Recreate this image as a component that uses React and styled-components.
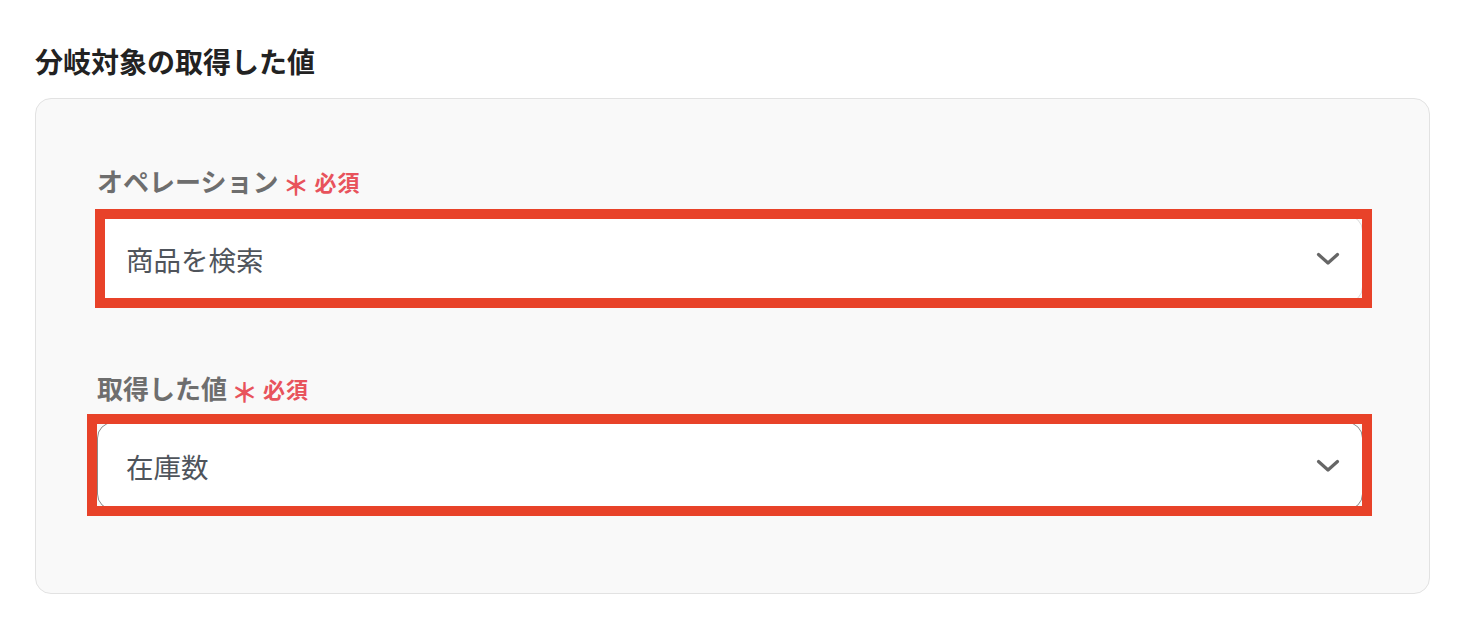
import React from 'react'
import styled, { createGlobalStyle } from 'styled-components'

const GlobalStyle = createGlobalStyle`
  body {
    margin: 0;
    background: #ffffff;
    font-family: "Noto Sans CJK JP", "Noto Sans", sans-serif;
  }
`

const Page = styled.div`
  padding: 41px 49px 0 35px;
`

const Title = styled.h2`
  margin: 0 0 17px;
  font-size: 28px;
  line-height: 40px;
  font-weight: 700;
  color: #222222;
`

const Card = styled.div`
  background: #f9f9f9;
  border: 1px solid #e2e2e2;
  border-radius: 16px;
  padding: 64px 66px 83px 61px;
  display: flex;
  flex-direction: column;
  gap: 67px;
`

const Field = styled.div`
  display: flex;
  flex-direction: column;
  gap: 16px;
`

const Label = styled.div`
  display: flex;
  align-items: center;
  font-size: 26px;
  line-height: 36px;
  font-weight: 700;
  color: #6e6e6e;
`

const Star = styled.span`
  margin: 0 5px 0 4px;
  color: #e8535c;
  font-size: 27px;
  font-weight: 700;
  position: relative;
  top: 4px;
`

const Required = styled.span`
  color: #e8535c;
  font-size: 22px;
  font-weight: 700;
  letter-spacing: 1px;
`

const SelectWrap = styled.div`
  position: relative;
`

const SelectBox = styled.div`
  height: 88px;
  box-sizing: border-box;
  background: #ffffff;
  border: 1px solid ${p => (p.$active ? '#8a8a8a' : '#dcdcdc')};
  border-radius: 16px;
  display: flex;
  align-items: center;
  justify-content: space-between;
  padding: 0 22px 0 28px;
  font-size: 27.5px;
  color: #4f545b;
`

const Highlight = styled.div`
  position: absolute;
  top: ${p => p.$t}px;
  left: ${p => p.$l}px;
  right: ${p => p.$r}px;
  bottom: ${p => p.$b}px;
  border: 10px solid #e84229;
  pointer-events: none;
`

const Chevron = () => (
  <svg width="24" height="14" viewBox="0 0 24 14">
    <path d="M2.5 2.5 L12 11 L21.5 2.5" fill="none" stroke="#666666" strokeWidth="3.2" strokeLinecap="round" strokeLinejoin="round" />
  </svg>
)

const fields = [
  { label: 'オペレーション', value: '商品を検索', box: { t: -6, l: -2, r: -9, b: -5 } },
  { label: '取得した値', value: '在庫数', active: true, box: { t: -8, l: -10, r: -9, b: -6 } },
]

const App = () => {
  return (
    <Page>
      <GlobalStyle />
      <Title>分岐対象の取得した値</Title>
      <Card>
        {fields.map(f => (
          <Field key={f.label}>
            <Label>
              {f.label}
              <Star>＊</Star>
              <Required>必須</Required>
            </Label>
            <SelectWrap>
              <SelectBox $active={f.active}>
                <span>{f.value}</span>
                <Chevron />
              </SelectBox>
              <Highlight $t={f.box.t} $l={f.box.l} $r={f.box.r} $b={f.box.b} />
            </SelectWrap>
          </Field>
        ))}
      </Card>
    </Page>
  )
}

export default App
